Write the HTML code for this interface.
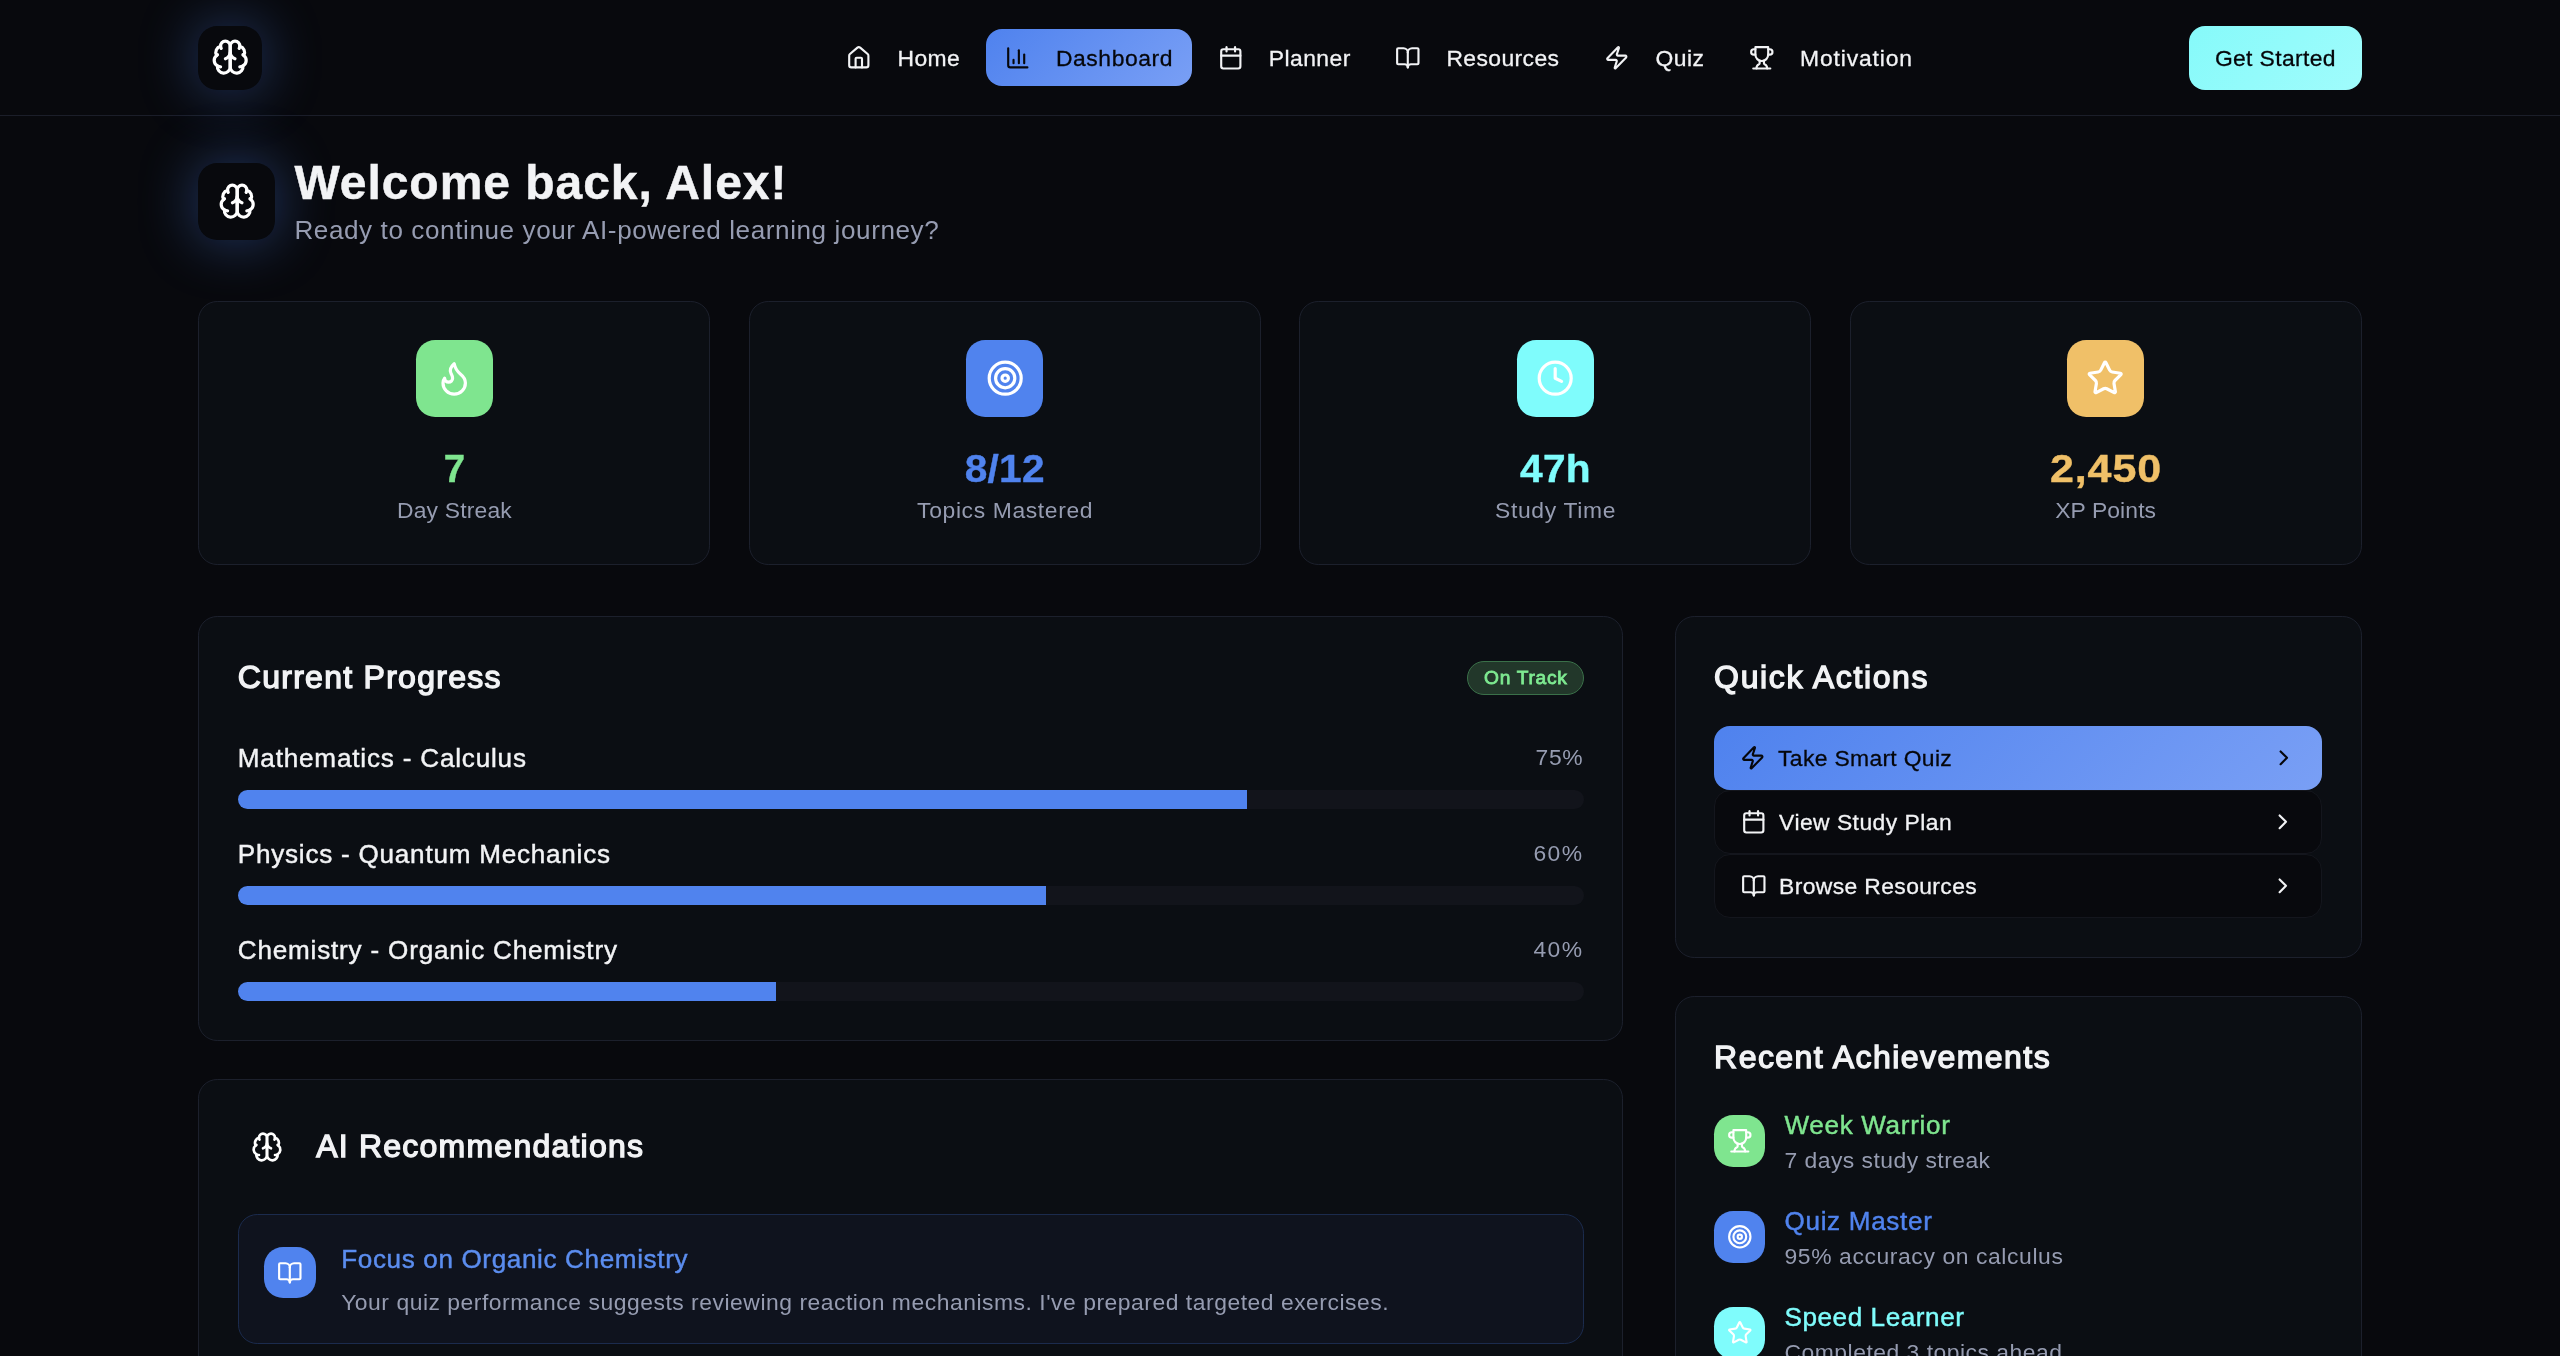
<!DOCTYPE html>
<html lang="en">
<head>
<meta charset="utf-8">
<title>StudyAI Dashboard</title>
<style>
*{box-sizing:border-box;margin:0;padding:0}
html,body{background:#08090d;width:2560px;height:1356px;overflow:hidden}
body{font-family:"Liberation Sans",sans-serif;color:#f2f3f5;-webkit-font-smoothing:antialiased}
#z{will-change:transform;zoom:1.6;width:1600px;height:848px;position:relative;overflow:hidden;background:#08090d}
svg.i{fill:none;stroke:currentColor;stroke-width:2;stroke-linecap:round;stroke-linejoin:round;display:block;flex:none}
.i16{width:16px;height:16px}.i20{width:20px;height:20px}.i24{width:24px;height:24px}
span.t{display:inline-block;white-space:nowrap}
.ni span.t,.cta span.t,.qa span.t{position:relative;top:0.7px}
/* nav */
nav{position:absolute;left:0;top:0;width:1600px;height:72.5px;border-bottom:1px solid #1b1e29;background:#08090d}
.logo{position:absolute;left:124px;top:16px;width:40px;height:40px;border-radius:12px;display:flex;align-items:center;justify-content:center;color:#fff;box-shadow:0 0 36px rgba(79,130,238,.42)}
.ni{position:absolute;top:18px;height:36px;border-radius:10px;display:flex;align-items:center;padding:0 12px;font-size:14.3px;font-weight:400;-webkit-text-stroke:0.18px currentColor;color:#f2f3f5}
.ni svg{margin-right:16px}
.ni.act{background:linear-gradient(135deg,#4f82ee 0%,#799ff5 100%);color:#06070b}
.cta{position:absolute;left:1368px;top:16px;width:108px;height:40px;border-radius:10px;background:linear-gradient(135deg,#86fafa,#a0fcfc);color:#05060a;font-size:14.3px;font-weight:400;-webkit-text-stroke:0.18px currentColor;display:flex;align-items:center;justify-content:center}
/* header */
.hbox{position:absolute;left:124px;top:102px;width:48px;height:48px;border-radius:12px;display:flex;align-items:center;justify-content:center;color:#fff;box-shadow:0 0 36px rgba(79,130,238,.42)}
h1{position:absolute;left:184px;top:96.5px;font-size:30px;line-height:36px;font-weight:700;-webkit-text-stroke:0.3px currentColor;color:#f2f3f5;white-space:nowrap}
.sub{position:absolute;left:184px;top:132px;font-size:16.3px;line-height:24px;color:#969cb1;white-space:nowrap}
/* cards */
.card{position:absolute;background:#0b0e13;border:1px solid #1c202c;border-radius:12px}
.stat{top:188px;width:320px;height:165px;text-align:center}
.stat .ib{position:absolute;left:calc(50% - 24px);top:24px;width:48px;height:48px;border-radius:12px;display:flex;align-items:center;justify-content:center;color:#fff}
.stat .num{position:absolute;left:0;right:0;top:88px;font-size:24px;line-height:32px;font-weight:700;-webkit-text-stroke:0.25px currentColor}
.stat .lab{position:absolute;left:0;right:0;top:120px;font-size:14.3px;line-height:20px;color:#969cb1}
.g{color:#7fe58f}.b{color:#5083ee}.c{color:#7ffcfc}.y{color:#f0c068}
.bg-g{background:#7fe58f}.bg-b{background:#5083ee}.bg-c{background:#7ffcfc}.bg-y{background:#f0c068}
h2{font-size:20px;line-height:28px;font-weight:400;-webkit-text-stroke:0.85px currentColor;color:#f2f3f5;white-space:nowrap}
.badge{position:absolute;right:24px;top:27.7px;height:21.3px;padding:0 10.1px;border-radius:999px;border:1px solid #3a7049;background:#22372a;color:#7eea91;font-size:12px;line-height:19.6px;font-weight:400;-webkit-text-stroke:0.5px currentColor}
.pr{position:absolute;left:24px;right:24px;height:44px}
.pr .l{position:absolute;left:0;top:0;font-size:16.3px;line-height:24px;font-weight:400;-webkit-text-stroke:0.28px currentColor;color:#f2f3f5}
.pr .p{position:absolute;right:0;top:-0.4px;font-size:14.3px;line-height:24px;color:#969cb1}
.pr .bar{position:absolute;left:0;right:0;top:32px;height:12px;border-radius:6px;background:#12141b;overflow:hidden}
.pr .bar i{display:block;height:100%;background:#5083ee}
.qa{position:absolute;left:24px;right:24px;height:40px;border-radius:10px;display:flex;align-items:center;padding:0 16px;font-size:14.3px;font-weight:400;-webkit-text-stroke:0.18px currentColor;color:#f2f3f5;background:#08090d;border:1px solid #14161d}
.qa svg:first-child{margin-right:8px}
.qa svg:last-child{margin-left:auto}
.qa.pri{background:linear-gradient(135deg,#4f82ee 0%,#799ff5 100%);color:#06070b;border:0}
.ach{position:absolute;left:24px;height:44px}
.ach .ib{position:absolute;left:0;top:6px;width:32px;height:32px;border-radius:12px;display:flex;align-items:center;justify-content:center;color:#fff}
.ach .a1{position:absolute;left:44px;top:0;font-size:16.3px;line-height:24px;font-weight:400;-webkit-text-stroke:0.28px currentColor;white-space:nowrap}
.ach .a2{position:absolute;left:44px;top:24px;font-size:14.3px;line-height:20px;color:#969cb1;white-space:nowrap}
.rec{position:absolute;left:24px;right:24px;top:84px;height:80.7px;border-radius:12px;border:1px solid #1b2b4d;background:#0f131e}
.rec .ib{position:absolute;left:16px;top:19.6px;width:32px;height:32px;border-radius:12px;background:#5083ee;color:#fff;display:flex;align-items:center;justify-content:center}
.rec .r1{position:absolute;left:64px;top:15.6px;font-size:16.3px;line-height:24px;font-weight:400;-webkit-text-stroke:0.28px currentColor;color:#5b8def;white-space:nowrap}
.rec .r2{position:absolute;left:64px;top:44.1px;font-size:14.3px;line-height:20px;color:#969cb1;white-space:nowrap}
</style>
</head>
<body>
<div id="z">

<nav>
  <div class="logo"><svg class="i i24" viewBox="0 0 24 24"><path d="M12 5a3 3 0 1 0-5.997.125 4 4 0 0 0-2.526 5.77 4 4 0 0 0 .556 6.588A4 4 0 1 0 12 18Z"/><path d="M12 5a3 3 0 1 1 5.997.125 4 4 0 0 1 2.526 5.77 4 4 0 0 1-.556 6.588A4 4 0 1 1 12 18Z"/><path d="M15 13a4.5 4.5 0 0 1-3-4 4.5 4.5 0 0 1-3 4"/><path d="M17.599 6.5a3 3 0 0 0 .399-1.375"/><path d="M6.003 5.125A3 3 0 0 0 6.401 6.5"/><path d="M3.477 10.896a4 4 0 0 1 .585-.396"/><path d="M19.938 10.5a4 4 0 0 1 .585.396"/><path d="M6 18a4 4 0 0 1-1.967-.516"/><path d="M19.967 17.484A4 4 0 0 1 18 18"/></svg></div>
  <div class="ni" style="left:517px"><svg class="i i16" viewBox="0 0 24 24"><path d="M15 21v-8a1 1 0 0 0-1-1h-4a1 1 0 0 0-1 1v8"/><path d="M3 10a2 2 0 0 1 .709-1.528l7-5.999a2 2 0 0 1 2.582 0l7 5.999A2 2 0 0 1 21 10v9a2 2 0 0 1-2 2H5a2 2 0 0 1-2-2z"/></svg><span class="t" id="t_home" style="letter-spacing:0.232px">Home</span></div>
  <div class="ni act" style="left:616px"><svg class="i i16" viewBox="0 0 24 24"><path d="M3 3v16a2 2 0 0 0 2 2h16"/><path d="M18 17V9"/><path d="M13 17V5"/><path d="M8 17v-3"/></svg><span class="t" id="t_dash" style="letter-spacing:0.353px">Dashboard</span></div>
  <div class="ni" style="left:749px"><svg class="i i16" viewBox="0 0 24 24"><path d="M8 2v4"/><path d="M16 2v4"/><rect width="18" height="18" x="3" y="4" rx="2"/><path d="M3 10h18"/></svg><span class="t" id="t_plan" style="letter-spacing:0.282px">Planner</span></div>
  <div class="ni" style="left:860px"><svg class="i i16" viewBox="0 0 24 24"><path d="M12 7v14"/><path d="M3 18a1 1 0 0 1-1-1V4a1 1 0 0 1 1-1h5a4 4 0 0 1 4 4 4 4 0 0 1 4-4h5a1 1 0 0 1 1 1v13a1 1 0 0 1-1 1h-6a3 3 0 0 0-3 3 3 3 0 0 0-3-3z"/></svg><span class="t" id="t_res" style="letter-spacing:0.254px">Resources</span></div>
  <div class="ni" style="left:990.7px"><svg class="i i16" viewBox="0 0 24 24"><path d="M4 14a1 1 0 0 1-.78-1.63l9.9-10.2a.5.5 0 0 1 .86.46l-1.92 6.02A1 1 0 0 0 13 10h7a1 1 0 0 1 .78 1.63l-9.9 10.2a.5.5 0 0 1-.86-.46l1.92-6.02A1 1 0 0 0 11 14z"/></svg><span class="t" id="t_quiz" style="letter-spacing:0.305px">Quiz</span></div>
  <div class="ni" style="left:1081px"><svg class="i i16" viewBox="0 0 24 24"><path d="M6 9H4.5a2.5 2.5 0 0 1 0-5H6"/><path d="M18 9h1.5a2.5 2.5 0 0 0 0-5H18"/><path d="M4 22h16"/><path d="M10 14.66V17c0 .55-.47.98-.97 1.21C7.85 18.75 7 20.24 7 22"/><path d="M14 14.66V17c0 .55.47.98.97 1.21C16.15 18.75 17 20.24 17 22"/><path d="M18 2H6v7a6 6 0 0 0 12 0V2Z"/></svg><span class="t" id="t_moti" style="letter-spacing:0.546px">Motivation</span></div>
  <div class="cta"><span class="t" id="t_cta" style="letter-spacing:0.228px;margin-right:-0.228px">Get Started</span></div>
</nav>

<div class="hbox"><svg class="i i24" viewBox="0 0 24 24"><path d="M12 5a3 3 0 1 0-5.997.125 4 4 0 0 0-2.526 5.77 4 4 0 0 0 .556 6.588A4 4 0 1 0 12 18Z"/><path d="M12 5a3 3 0 1 1 5.997.125 4 4 0 0 1 2.526 5.77 4 4 0 0 1-.556 6.588A4 4 0 1 1 12 18Z"/><path d="M15 13a4.5 4.5 0 0 1-3-4 4.5 4.5 0 0 1-3 4"/><path d="M17.599 6.5a3 3 0 0 0 .399-1.375"/><path d="M6.003 5.125A3 3 0 0 0 6.401 6.5"/><path d="M3.477 10.896a4 4 0 0 1 .585-.396"/><path d="M19.938 10.5a4 4 0 0 1 .585.396"/><path d="M6 18a4 4 0 0 1-1.967-.516"/><path d="M19.967 17.484A4 4 0 0 1 18 18"/></svg></div>
<h1><span class="t" id="t_h1" style="letter-spacing:0.596px">Welcome back, Alex!</span></h1>
<div class="sub"><span class="t" id="t_sub" style="letter-spacing:0.371px">Ready to continue your AI-powered learning journey?</span></div>

<div class="card stat" style="left:124px">
  <div class="ib bg-g"><svg class="i i24" viewBox="0 0 24 24"><path d="M8.5 14.5A2.5 2.5 0 0 0 11 12c0-1.38-.5-2-1-3-1.072-2.143-.224-4.054 2-6 .5 2.5 2 4.9 4 6.5 2 1.6 3 3.5 3 5.5a7 7 0 1 1-14 0c0-1.153.433-2.294 1-3a2.5 2.5 0 0 0 2.5 2.5z"/></svg></div>
  <div class="num g"><span class="t" id="t_n1" style="transform:scaleX(1.0);letter-spacing:0.400px;margin-right:-0.400px">7</span></div>
  <div class="lab"><span class="t" id="t_l1" style="letter-spacing:0.115px;margin-right:-0.115px">Day Streak</span></div>
</div>
<div class="card stat" style="left:468px">
  <div class="ib bg-b"><svg class="i i24" viewBox="0 0 24 24"><circle cx="12" cy="12" r="10"/><circle cx="12" cy="12" r="6"/><circle cx="12" cy="12" r="2"/></svg></div>
  <div class="num b"><span class="t" id="t_n2" style="transform:scaleX(1.06);letter-spacing:0.116px;margin-right:-0.116px">8/12</span></div>
  <div class="lab"><span class="t" id="t_l2" style="letter-spacing:0.393px;margin-right:-0.393px">Topics Mastered</span></div>
</div>
<div class="card stat" style="left:812px">
  <div class="ib bg-c"><svg class="i i24" viewBox="0 0 24 24"><circle cx="12" cy="12" r="10"/><polyline points="12 6 12 12 16 14"/></svg></div>
  <div class="num c"><span class="t" id="t_n3" style="transform:scaleX(1.06);letter-spacing:0.173px;margin-right:-0.173px">47h</span></div>
  <div class="lab"><span class="t" id="t_l3" style="letter-spacing:0.411px;margin-right:-0.411px">Study Time</span></div>
</div>
<div class="card stat" style="left:1156px">
  <div class="ib bg-y"><svg class="i i24" viewBox="0 0 24 24"><path d="M11.525 2.295a.53.53 0 0 1 .95 0l2.31 4.679a2.123 2.123 0 0 0 1.595 1.16l5.166.756a.53.53 0 0 1 .294.904l-3.736 3.638a2.123 2.123 0 0 0-.611 1.878l.882 5.14a.53.53 0 0 1-.771.56l-4.618-2.428a2.122 2.122 0 0 0-1.973 0L6.396 21.01a.53.53 0 0 1-.77-.56l.881-5.139a2.122 2.122 0 0 0-.611-1.879L2.16 9.795a.53.53 0 0 1 .294-.906l5.165-.755a2.122 2.122 0 0 0 1.597-1.16z"/></svg></div>
  <div class="num y"><span class="t" id="t_n4" style="transform:scaleX(1.12);letter-spacing:0.490px;margin-right:-0.490px">2,450</span></div>
  <div class="lab"><span class="t" id="t_l4" style="letter-spacing:0.067px;margin-right:-0.067px">XP Points</span></div>
</div>

<!-- Current Progress -->
<div class="card" style="left:124px;top:385px;width:890.67px;height:265.5px">
  <h2 style="position:absolute;left:24px;top:24px"><span class="t" id="t_cp" style="letter-spacing:0.795px">Current Progress</span></h2>
  <div class="badge"><span class="t" id="t_badge" style="letter-spacing:0.442px;margin-right:-0.442px">On Track</span></div>
  <div class="pr" style="top:76px"><div class="l"><span class="t" id="t_p1" style="letter-spacing:0.511px">Mathematics - Calculus</span></div><div class="p"><span class="t" id="t_v1" style="letter-spacing:0.459px;margin-right:0.4px">75%</span></div><div class="bar"><i style="width:75%"></i></div></div>
  <div class="pr" style="top:136px"><div class="l"><span class="t" id="t_p2" style="letter-spacing:0.482px">Physics - Quantum Mechanics</span></div><div class="p"><span class="t" id="t_v2" style="letter-spacing:0.876px;margin-right:0.4px">60%</span></div><div class="bar"><i style="width:60%"></i></div></div>
  <div class="pr" style="top:196px"><div class="l"><span class="t" id="t_p3" style="letter-spacing:0.507px">Chemistry - Organic Chemistry</span></div><div class="p"><span class="t" id="t_v3" style="letter-spacing:0.876px;margin-right:0.4px">40%</span></div><div class="bar"><i style="width:40%"></i></div></div>
</div>

<!-- AI Recommendations -->
<div class="card" style="left:124px;top:674.4px;width:890.67px;height:400px">
  <div style="position:absolute;left:32px;top:32px;color:#fff"><svg class="i i20" viewBox="0 0 24 24"><path d="M12 5a3 3 0 1 0-5.997.125 4 4 0 0 0-2.526 5.77 4 4 0 0 0 .556 6.588A4 4 0 1 0 12 18Z"/><path d="M12 5a3 3 0 1 1 5.997.125 4 4 0 0 1 2.526 5.77 4 4 0 0 1-.556 6.588A4 4 0 1 1 12 18Z"/><path d="M15 13a4.5 4.5 0 0 1-3-4 4.5 4.5 0 0 1-3 4"/><path d="M17.599 6.5a3 3 0 0 0 .399-1.375"/><path d="M6.003 5.125A3 3 0 0 0 6.401 6.5"/><path d="M3.477 10.896a4 4 0 0 1 .585-.396"/><path d="M19.938 10.5a4 4 0 0 1 .585.396"/><path d="M6 18a4 4 0 0 1-1.967-.516"/><path d="M19.967 17.484A4 4 0 0 1 18 18"/></svg></div>
  <h2 style="position:absolute;left:73px;top:27.6px"><span class="t" id="t_ai" style="letter-spacing:0.766px">AI Recommendations</span></h2>
  <div class="rec">
    <div class="ib"><svg class="i i16" viewBox="0 0 24 24"><path d="M12 7v14"/><path d="M3 18a1 1 0 0 1-1-1V4a1 1 0 0 1 1-1h5a4 4 0 0 1 4 4 4 4 0 0 1 4-4h5a1 1 0 0 1 1 1v13a1 1 0 0 1-1 1h-6a3 3 0 0 0-3 3 3 3 0 0 0-3-3z"/></svg></div>
    <div class="r1"><span class="t" id="t_r1" style="letter-spacing:0.398px">Focus on Organic Chemistry</span></div>
    <div class="r2"><span class="t" id="t_r2" style="letter-spacing:0.330px">Your quiz performance suggests reviewing reaction mechanisms. I've prepared targeted exercises.</span></div>
  </div>
</div>

<!-- Quick Actions -->
<div class="card" style="left:1046.7px;top:385px;width:429.3px;height:214px">
  <h2 style="position:absolute;left:24px;top:24px"><span class="t" id="t_qa" style="letter-spacing:1.016px">Quick Actions</span></h2>
  <div class="qa pri" style="top:68px"><svg class="i i16" viewBox="0 0 24 24"><path d="M4 14a1 1 0 0 1-.78-1.63l9.9-10.2a.5.5 0 0 1 .86.46l-1.92 6.02A1 1 0 0 0 13 10h7a1 1 0 0 1 .78 1.63l-9.9 10.2a.5.5 0 0 1-.86-.46l1.92-6.02A1 1 0 0 0 11 14z"/></svg><span class="t" id="t_q1" style="letter-spacing:0.205px">Take Smart Quiz</span><svg class="i i16" viewBox="0 0 24 24"><path d="m9 18 6-6-6-6"/></svg></div>
  <div class="qa" style="top:108px"><svg class="i i16" viewBox="0 0 24 24"><path d="M8 2v4"/><path d="M16 2v4"/><rect width="18" height="18" x="3" y="4" rx="2"/><path d="M3 10h18"/></svg><span class="t" id="t_q2" style="letter-spacing:0.285px">View Study Plan</span><svg class="i i16" viewBox="0 0 24 24"><path d="m9 18 6-6-6-6"/></svg></div>
  <div class="qa" style="top:148px"><svg class="i i16" viewBox="0 0 24 24"><path d="M12 7v14"/><path d="M3 18a1 1 0 0 1-1-1V4a1 1 0 0 1 1-1h5a4 4 0 0 1 4 4 4 4 0 0 1 4-4h5a1 1 0 0 1 1 1v13a1 1 0 0 1-1 1h-6a3 3 0 0 0-3 3 3 3 0 0 0-3-3z"/></svg><span class="t" id="t_q3" style="letter-spacing:0.235px">Browse Resources</span><svg class="i i16" viewBox="0 0 24 24"><path d="m9 18 6-6-6-6"/></svg></div>
</div>

<!-- Recent Achievements -->
<div class="card" style="left:1046.7px;top:622.5px;width:429.3px;height:300px">
  <h2 style="position:absolute;left:24px;top:24px"><span class="t" id="t_ra" style="letter-spacing:0.904px">Recent Achievements</span></h2>
  <div class="ach" style="top:68px"><div class="ib bg-g"><svg class="i i16" viewBox="0 0 24 24"><path d="M6 9H4.5a2.5 2.5 0 0 1 0-5H6"/><path d="M18 9h1.5a2.5 2.5 0 0 0 0-5H18"/><path d="M4 22h16"/><path d="M10 14.66V17c0 .55-.47.98-.97 1.21C7.85 18.75 7 20.24 7 22"/><path d="M14 14.66V17c0 .55.47.98.97 1.21C16.15 18.75 17 20.24 17 22"/><path d="M18 2H6v7a6 6 0 0 0 12 0V2Z"/></svg></div><div class="a1 g"><span class="t" id="t_a1" style="letter-spacing:0.420px">Week Warrior</span></div><div class="a2"><span class="t" id="t_b1" style="letter-spacing:0.294px">7 days study streak</span></div></div>
  <div class="ach" style="top:128px"><div class="ib bg-b"><svg class="i i16" viewBox="0 0 24 24"><circle cx="12" cy="12" r="10"/><circle cx="12" cy="12" r="6"/><circle cx="12" cy="12" r="2"/></svg></div><div class="a1 b"><span class="t" id="t_a2" style="letter-spacing:0.422px">Quiz Master</span></div><div class="a2"><span class="t" id="t_b2" style="letter-spacing:0.378px">95% accuracy on calculus</span></div></div>
  <div class="ach" style="top:188px"><div class="ib bg-c"><svg class="i i16" viewBox="0 0 24 24"><path d="M11.525 2.295a.53.53 0 0 1 .95 0l2.31 4.679a2.123 2.123 0 0 0 1.595 1.16l5.166.756a.53.53 0 0 1 .294.904l-3.736 3.638a2.123 2.123 0 0 0-.611 1.878l.882 5.14a.53.53 0 0 1-.771.56l-4.618-2.428a2.122 2.122 0 0 0-1.973 0L6.396 21.01a.53.53 0 0 1-.77-.56l.881-5.139a2.122 2.122 0 0 0-.611-1.879L2.16 9.795a.53.53 0 0 1 .294-.906l5.165-.755a2.122 2.122 0 0 0 1.597-1.16z"/></svg></div><div class="a1 c"><span class="t" id="t_a3" style="letter-spacing:0.358px">Speed Learner</span></div><div class="a2"><span class="t" id="t_b3" style="letter-spacing:0.318px">Completed 3 topics ahead</span></div></div>
</div>

</div>
</body>
</html>
